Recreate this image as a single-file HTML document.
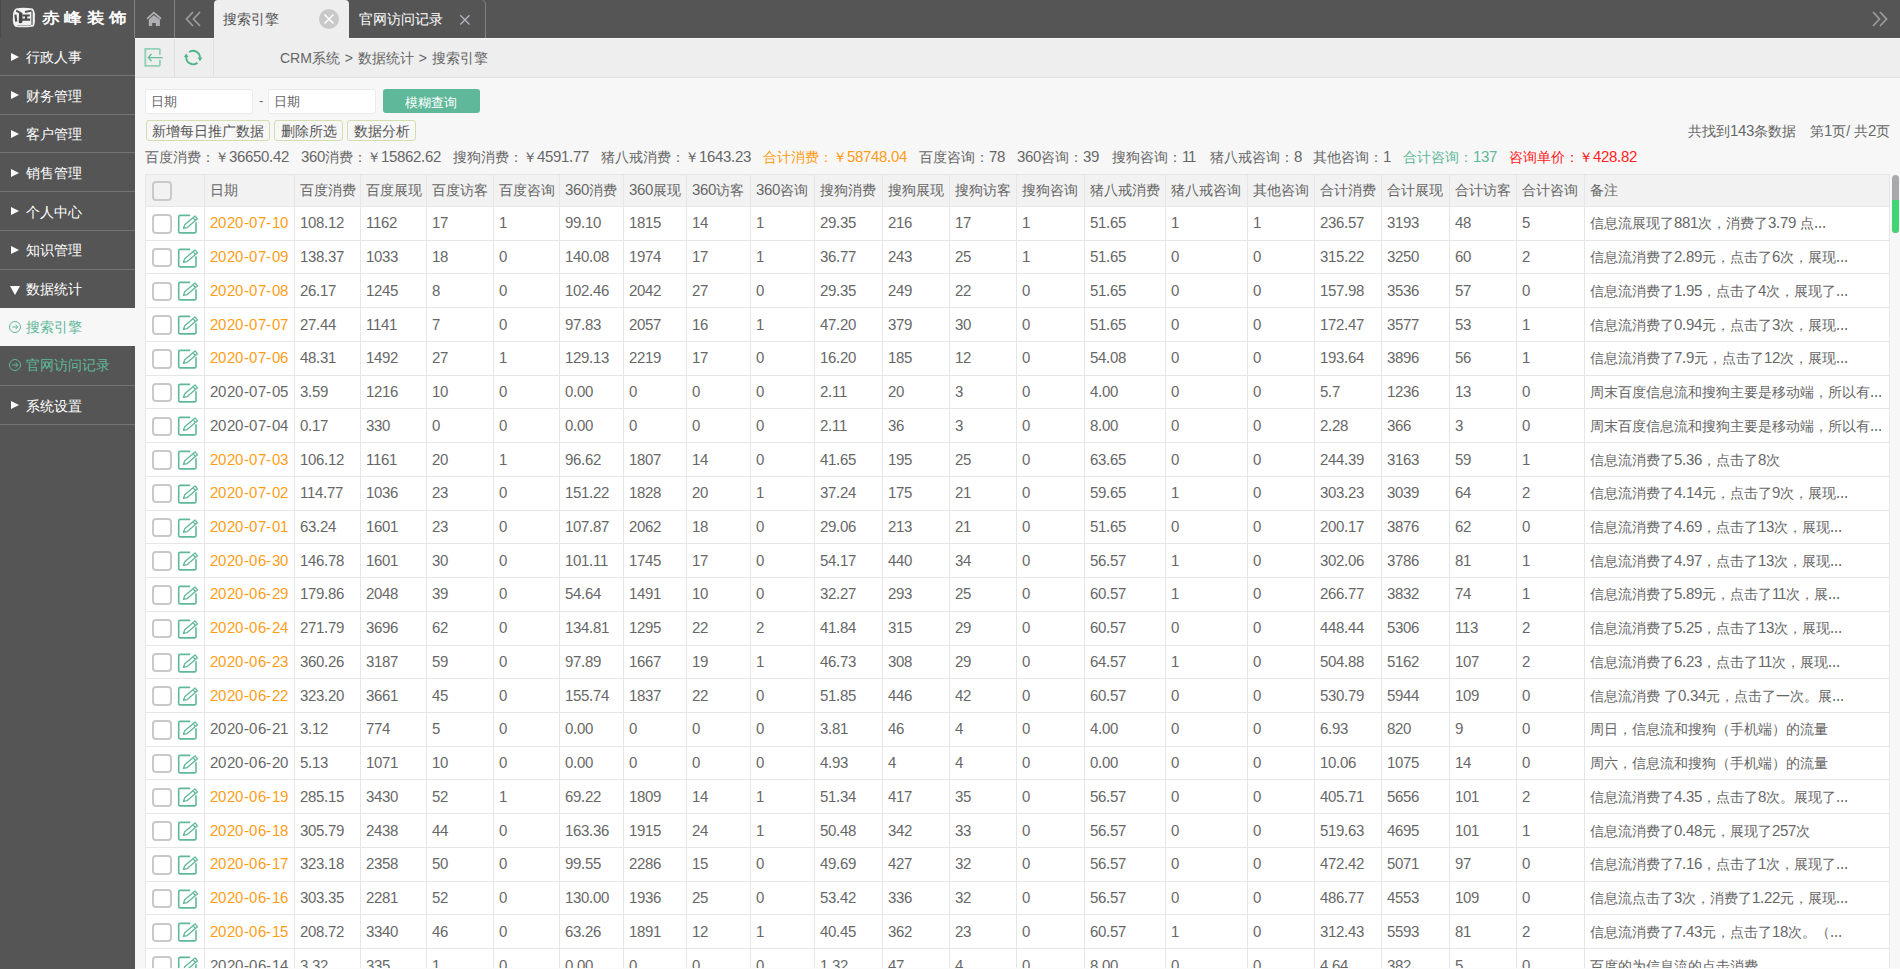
<!DOCTYPE html>
<html><head><meta charset="utf-8">
<style>
@font-face{font-family:"LSD";src:local("Liberation Sans");size-adjust:104%;unicode-range:U+0030-0039,U+002E,U+002D}
*{box-sizing:border-box;margin:0;padding:0}
html,body{width:1900px;height:969px;overflow:hidden;background:#f7f7f7;font-family:"Liberation Sans",sans-serif;color:#666}
.abs{position:absolute}
#top{position:absolute;left:0;top:0;width:1900px;height:38px;background:#555}
#logo{position:absolute;left:0;top:0;width:135px;height:38px;background:#555;border-left:1px solid #4a4a4a}
#logo .t{position:absolute;left:41px;top:8px;color:#fff;font-weight:bold;font-size:18px;letter-spacing:4.3px;line-height:20px;transform:scaleY(.85);transform-origin:0 50%}
.tabsep{position:absolute;top:0;width:1px;height:38px;background:#828282}
#tab1{position:absolute;left:214px;top:0;width:135px;height:38px;background:#eee;border-radius:4px 4px 0 0}
#tab1 .t{position:absolute;left:9px;top:10px;font-size:14px;line-height:18px;color:#555}
#tab1 .x{position:absolute;left:105.3px;top:9px;width:20px;height:20px;border-radius:50%;background:#c9c9c9}
#tab2 .t{position:absolute;left:359px;top:10px;font-size:14px;line-height:18px;color:#fff}
#side{position:absolute;left:0;top:38px;width:135px;height:931px;background:#555}
.mi{position:absolute;left:0;width:135px;height:38.73px;border-bottom:1px solid #747474;color:#fff;font-size:14px}
.mi .tri{position:absolute;left:11px;top:15.3px;width:0;height:0;border-left:8px solid #fff;border-top:4.8px solid transparent;border-bottom:4.8px solid transparent}
.mi .tri.d{left:10px;top:16px;border-top:9px solid #fff;border-left:5px solid transparent;border-right:5px solid transparent;border-bottom:0}
.mi .t{position:absolute;left:26px;top:10.5px;line-height:18px}
.sub{position:absolute;left:0;width:135px;height:39px;color:#5fb89a;font-size:14px}
.sub .t{position:absolute;left:26px;top:10px;line-height:18px}
.sub .ci{position:absolute;left:8.5px;top:13px;width:12px;height:12px;border:1px solid #5fb89a;border-radius:50%}.sub .ci svg{position:absolute;left:0;top:0}
#tool{position:absolute;left:135px;top:38px;width:1765px;height:40px;background:#eee;border-top:1px solid #f8f8f8;border-bottom:1px solid #e2e2e2}
#tool .sep{position:absolute;top:0;width:1px;height:38px;background:#e0e0e0}
#crumb{position:absolute;left:280px;top:49px;font-size:14px;line-height:18px;color:#666;word-spacing:1px}
.inp{position:absolute;top:89px;height:25px;background:#fff;border:1px solid #eaeaea;border-radius:3px;font-size:13px;color:#666}
.inp span{position:absolute;left:5px;top:3px;line-height:18px}
#dash{position:absolute;left:259px;top:92px;font-size:13px;line-height:18px}
#qbtn{position:absolute;left:383px;top:89px;width:97px;height:24px;background:#5fb89a;border-radius:3px;color:#fff;font-size:13px;text-align:center;line-height:27px;padding-right:2px}
.btn{position:absolute;top:120px;height:21px;border:1px solid #d3deae;border-radius:3px;background:#f7f7f7;font-size:14px;line-height:20px;color:#555;text-align:center}
#info{font-family:"LSD","Liberation Sans",sans-serif;position:absolute;right:10px;top:122px;font-size:14px;line-height:18px;color:#666;white-space:nowrap}
#stats{font-family:"LSD","Liberation Sans",sans-serif;position:absolute;left:145px;top:148px;font-size:14px;line-height:18px;color:#666;white-space:nowrap}
#stats span{position:absolute;top:0;white-space:nowrap}
.or{color:#ff9c14}.gr{color:#5fb89a}.rd{color:#f22}
#tbl{position:absolute;left:145px;top:174px;width:1745px;border-collapse:collapse;table-layout:fixed;background:#fff}
#tbl th,#tbl td{font-family:"LSD","Liberation Sans",sans-serif;border:1px solid #e6e6e6;padding:0 5px;text-align:left;white-space:nowrap;overflow:hidden;font-weight:normal;font-size:14px;color:#666}
#tbl th{background:#f2f2f2;height:32px}#tbl th .cb{background:transparent}
#tbl td{height:33.74px}
#tbl td.o{color:#ff9c14}#tbl td:last-child{padding-top:2px}#tbl td.dt{letter-spacing:.45px}
.cb{display:inline-block;vertical-align:middle;width:19.5px;height:19.5px;border:2px solid #c9c9c9;border-radius:4px;background:#fff;position:relative;top:.5px}
#tbl .c0{padding:0 0 0 6px}
.ed{vertical-align:middle;margin-left:5.5px;position:relative;top:.6px}
#sb{position:absolute;left:1892px;top:175px;width:7px;height:58px;border-radius:4px;background:#a9a9ad;overflow:hidden}
#sb i{position:absolute;left:0;top:25px;width:7px;height:33px;background:#41d474;border-radius:0 0 4px 4px}
</style></head><body>
<div id="top"></div>
<div id="logo">
<svg class="abs" style="left:10px;top:6px" width="26" height="23" viewBox="10 6 26 23"><path d="M15 8.4Q23 7.2 31.6 8.6Q34.6 12 33.8 18Q34.4 24.4 32.4 26.4Q23 28 14.2 26.8Q11.2 24 12 17Q11.6 10.4 15 8.4Z" fill="#f2f2f2"/><path d="M18 13.2Q19.8 11.6 21.6 13.4L21.4 22.2Q19.6 24.2 17.8 22.4Z" fill="#454545"/><path d="M21.6 14.4H28.8V16.6H21.6ZM21.2 18.6H29.2V20.8H21.2ZM24 15.5H26.2V19H24Z" fill="#4a4a4a"/><path d="M15.2 10.6L20.2 13.4M24 12L30.6 10.6" stroke="#505050" stroke-width="1.8"/><path d="M31 11V25" stroke="#5a5a5a" stroke-width="1.3"/><path d="M14.4 14.6L15.2 21.6" stroke="#4e4e4e" stroke-width="2.2"/><path d="M16 25.6H30" stroke="#aaa" stroke-width="1"/></svg>
<div class="t">赤峰装饰</div></div>
<div class="tabsep" style="left:134px"></div>
<div class="tabsep" style="left:174px"></div>
<svg class="abs" style="left:145px;top:10px" width="18" height="18" viewBox="0 0 18 18"><path d="M2.6 8.3L8.8 2.6L15.4 8.3" fill="none" stroke="#b1afb4" stroke-width="1.8" stroke-linecap="round"/><path d="M3.8 9.6L8.8 5.3L14.9 9.6V16H10.8V13H7.2V16H3.8z" fill="#b1afb4"/></svg>
<svg class="abs" style="left:185px;top:11px" width="17" height="16" viewBox="0 0 17 16"><path d="M8 1L1.5 8L8 15M15 1L8.5 8L15 15" fill="none" stroke="#9a9a9a" stroke-width="1.8"/></svg>
<div id="tab1"><div class="t">搜索引擎</div><div class="x"><svg width="20" height="20" viewBox="0 0 20 20"><path d="M5.5 5.5L14.5 14.5M14.5 5.5L5.5 14.5" stroke="#fff" stroke-width="1.5"/></svg></div></div>
<div id="tab2"><div class="t">官网访问记录</div></div>
<svg class="abs" style="left:459px;top:14px" width="12" height="12" viewBox="0 0 12 12"><path d="M1.3 1.3L10.5 10.5M10.5 1.3L1.3 10.5" stroke="#b8b4c0" stroke-width="1.3"/></svg>
<svg class="abs" style="left:478px;top:0" width="10" height="38" viewBox="0 0 10 38"><path d="M7.5 38V4Q7.5 1 4.5 0" fill="none" stroke="#828282" stroke-width="1"/></svg>
<svg class="abs" style="left:1872px;top:11px" width="16" height="16" viewBox="0 0 16 16"><path d="M1 1L7.5 8L1 15M8 1L14.5 8L8 15" fill="none" stroke="#9a9a9a" stroke-width="1.8"/></svg>

<div id="side">
<div class="mi" style="top:-0.73px"><i class="tri"></i><span class="t">行政人事</span></div>
<div class="mi" style="top:38px"><i class="tri"></i><span class="t">财务管理</span></div>
<div class="mi" style="top:76.73px"><i class="tri"></i><span class="t">客户管理</span></div>
<div class="mi" style="top:115.46px"><i class="tri"></i><span class="t">销售管理</span></div>
<div class="mi" style="top:154.19px"><i class="tri"></i><span class="t">个人中心</span></div>
<div class="mi" style="top:192.92px"><i class="tri"></i><span class="t">知识管理</span></div>
<div class="mi" style="top:231.65px;height:38.35px;border-bottom:0"><i class="tri d"></i><span class="t">数据统计</span></div>
<div class="sub" style="top:270px;height:38.4px;background:#f7f7f7"><i class="ci"><svg width="12" height="12" viewBox="0 0 12 12" style="left:-1px;top:-1px"><path d="M3.2 6H8.8M6.5 3.7L8.8 6L6.5 8.3" fill="none" stroke="#5fb89a" stroke-width="1"/></svg></i><span class="t">搜索引擎</span></div>
<div class="sub" style="top:308.4px;height:39.6px;border-bottom:1px solid #747474"><i class="ci"><svg width="12" height="12" viewBox="0 0 12 12" style="left:-1px;top:-1px"><path d="M3.2 6H8.8M6.5 3.7L8.8 6L6.5 8.3" fill="none" stroke="#5fb89a" stroke-width="1"/></svg></i><span class="t">官网访问记录</span></div>
<div class="mi" style="top:348px;height:39px"><i class="tri"></i><span class="t">系统设置</span></div>
</div>

<div id="tool"><div class="sep" style="left:39px"></div><div class="sep" style="left:78px"></div></div>
<svg class="abs" style="left:143px;top:47px" width="21" height="21" viewBox="0 0 21 21"><path d="M16.9 7.7V2.9Q16.9 1.9 15.9 1.9H2.3V18.8H15.9Q16.9 18.8 16.9 17.8V12.8" fill="none" stroke="#93d1b7" stroke-width="1.8"/><path d="M5.3 10.6H19.7M8.5 7L5.3 10.6L8.5 14.2" fill="none" stroke="#62bf9a" stroke-width="1.3"/></svg>
<svg class="abs" style="left:183px;top:47px" width="21" height="21" viewBox="0 0 21 21"><path d="M6.05 5.1A6.9 6.9 0 0 1 16.97 10.6M14.44 15.71A6.9 6.9 0 0 1 3.22 9.87" fill="none" stroke="#4fb488" stroke-width="1.9"/><path d="M14.6 10.4H19.4L17 14.2Z M0.9 10.1H5.5L3.2 6.6Z" fill="#4fb488"/></svg>
<div style="position:absolute;left:214px;top:38px;width:135px;height:1px;background:#eee"></div>
<div id="crumb">CRM系统 &gt; 数据统计 &gt; 搜索引擎</div>

<div class="inp" style="left:145px;width:108px"><span>日期</span></div>
<div id="dash">-</div>
<div class="inp" style="left:268px;width:108px"><span>日期</span></div>
<div id="qbtn">模糊查询</div>
<div class="btn" style="left:146px;width:124px">新增每日推广数据</div>
<div class="btn" style="left:274px;width:69px">删除所选</div>
<div class="btn" style="left:347px;width:69px">数据分析</div>
<div id="info" style="right:auto;left:1688px">共找到143条数据</div><div id="info">第1页/ 共2页</div>
<div id="stats">
<span style="left:0">百度消费：￥36650.42</span>
<span style="left:156px">360消费：￥15862.62</span>
<span style="left:308px">搜狗消费：￥4591.77</span>
<span style="left:456px">猪八戒消费：￥1643.23</span>
<span class="or" style="left:618px">合计消费：￥58748.04</span>
<span style="left:774px">百度咨询：78</span>
<span style="left:872px">360咨询：39</span>
<span style="left:967px">搜狗咨询：11</span>
<span style="left:1065px">猪八戒咨询：8</span>
<span style="left:1168px">其他咨询：1</span>
<span class="gr" style="left:1258px">合计咨询：137</span>
<span class="rd" style="left:1364px">咨询单价：￥428.82</span>
</div>

<table id="tbl"><colgroup><col style="width:59px"><col style="width:90px"><col style="width:66px"><col style="width:66px"><col style="width:67px"><col style="width:66px"><col style="width:64px"><col style="width:63px"><col style="width:64px"><col style="width:64px"><col style="width:68px"><col style="width:67px"><col style="width:67px"><col style="width:68px"><col style="width:81px"><col style="width:82px"><col style="width:67px"><col style="width:67px"><col style="width:68px"><col style="width:67px"><col style="width:68px"><col style="width:305px"></colgroup>
<thead><tr><th class="c0"><span class="cb"></span></th><th>日期</th><th>百度消费</th><th>百度展现</th><th>百度访客</th><th>百度咨询</th><th>360消费</th><th>360展现</th><th>360访客</th><th>360咨询</th><th>搜狗消费</th><th>搜狗展现</th><th>搜狗访客</th><th>搜狗咨询</th><th>猪八戒消费</th><th>猪八戒咨询</th><th>其他咨询</th><th>合计消费</th><th>合计展现</th><th>合计访客</th><th>合计咨询</th><th>备注</th></tr></thead>
<tbody>
<tr><td class="c0"><span class="cb"></span><svg class="ed" width="22" height="22" viewBox="0 0 22 22"><path d="M13.2 2.4H3.2A1.5 1.5 0 0 0 1.7 3.9V18.4A1.5 1.5 0 0 0 3.2 19.9H17.5A1.5 1.5 0 0 0 19 18.4V9.2" fill="none" stroke="#5fb89a" stroke-width="1.6"/><g transform="translate(6.1 15.6) rotate(-40.5)"><path d="M0.5 0L3.8 -1.9H17.3V1.9H3.8Z M14.6 -1.9V1.9" fill="none" stroke="#5fb89a" stroke-width="1.3" stroke-linejoin="round"/></g></svg></td><td class="dt o">2020-07-10</td><td>108.12</td><td>1162</td><td>17</td><td>1</td><td>99.10</td><td>1815</td><td>14</td><td>1</td><td>29.35</td><td>216</td><td>17</td><td>1</td><td>51.65</td><td>1</td><td>1</td><td>236.57</td><td>3193</td><td>48</td><td>5</td><td>信息流展现了881次，消费了3.79 点...</td></tr>
<tr><td class="c0"><span class="cb"></span><svg class="ed" width="22" height="22" viewBox="0 0 22 22"><path d="M13.2 2.4H3.2A1.5 1.5 0 0 0 1.7 3.9V18.4A1.5 1.5 0 0 0 3.2 19.9H17.5A1.5 1.5 0 0 0 19 18.4V9.2" fill="none" stroke="#5fb89a" stroke-width="1.6"/><g transform="translate(6.1 15.6) rotate(-40.5)"><path d="M0.5 0L3.8 -1.9H17.3V1.9H3.8Z M14.6 -1.9V1.9" fill="none" stroke="#5fb89a" stroke-width="1.3" stroke-linejoin="round"/></g></svg></td><td class="dt o">2020-07-09</td><td>138.37</td><td>1033</td><td>18</td><td>0</td><td>140.08</td><td>1974</td><td>17</td><td>1</td><td>36.77</td><td>243</td><td>25</td><td>1</td><td>51.65</td><td>0</td><td>0</td><td>315.22</td><td>3250</td><td>60</td><td>2</td><td>信息流消费了2.89元，点击了6次，展现...</td></tr>
<tr><td class="c0"><span class="cb"></span><svg class="ed" width="22" height="22" viewBox="0 0 22 22"><path d="M13.2 2.4H3.2A1.5 1.5 0 0 0 1.7 3.9V18.4A1.5 1.5 0 0 0 3.2 19.9H17.5A1.5 1.5 0 0 0 19 18.4V9.2" fill="none" stroke="#5fb89a" stroke-width="1.6"/><g transform="translate(6.1 15.6) rotate(-40.5)"><path d="M0.5 0L3.8 -1.9H17.3V1.9H3.8Z M14.6 -1.9V1.9" fill="none" stroke="#5fb89a" stroke-width="1.3" stroke-linejoin="round"/></g></svg></td><td class="dt o">2020-07-08</td><td>26.17</td><td>1245</td><td>8</td><td>0</td><td>102.46</td><td>2042</td><td>27</td><td>0</td><td>29.35</td><td>249</td><td>22</td><td>0</td><td>51.65</td><td>0</td><td>0</td><td>157.98</td><td>3536</td><td>57</td><td>0</td><td>信息流消费了1.95，点击了4次，展现了...</td></tr>
<tr><td class="c0"><span class="cb"></span><svg class="ed" width="22" height="22" viewBox="0 0 22 22"><path d="M13.2 2.4H3.2A1.5 1.5 0 0 0 1.7 3.9V18.4A1.5 1.5 0 0 0 3.2 19.9H17.5A1.5 1.5 0 0 0 19 18.4V9.2" fill="none" stroke="#5fb89a" stroke-width="1.6"/><g transform="translate(6.1 15.6) rotate(-40.5)"><path d="M0.5 0L3.8 -1.9H17.3V1.9H3.8Z M14.6 -1.9V1.9" fill="none" stroke="#5fb89a" stroke-width="1.3" stroke-linejoin="round"/></g></svg></td><td class="dt o">2020-07-07</td><td>27.44</td><td>1141</td><td>7</td><td>0</td><td>97.83</td><td>2057</td><td>16</td><td>1</td><td>47.20</td><td>379</td><td>30</td><td>0</td><td>51.65</td><td>0</td><td>0</td><td>172.47</td><td>3577</td><td>53</td><td>1</td><td>信息流消费了0.94元，点击了3次，展现...</td></tr>
<tr><td class="c0"><span class="cb"></span><svg class="ed" width="22" height="22" viewBox="0 0 22 22"><path d="M13.2 2.4H3.2A1.5 1.5 0 0 0 1.7 3.9V18.4A1.5 1.5 0 0 0 3.2 19.9H17.5A1.5 1.5 0 0 0 19 18.4V9.2" fill="none" stroke="#5fb89a" stroke-width="1.6"/><g transform="translate(6.1 15.6) rotate(-40.5)"><path d="M0.5 0L3.8 -1.9H17.3V1.9H3.8Z M14.6 -1.9V1.9" fill="none" stroke="#5fb89a" stroke-width="1.3" stroke-linejoin="round"/></g></svg></td><td class="dt o">2020-07-06</td><td>48.31</td><td>1492</td><td>27</td><td>1</td><td>129.13</td><td>2219</td><td>17</td><td>0</td><td>16.20</td><td>185</td><td>12</td><td>0</td><td>54.08</td><td>0</td><td>0</td><td>193.64</td><td>3896</td><td>56</td><td>1</td><td>信息流消费了7.9元，点击了12次，展现...</td></tr>
<tr><td class="c0"><span class="cb"></span><svg class="ed" width="22" height="22" viewBox="0 0 22 22"><path d="M13.2 2.4H3.2A1.5 1.5 0 0 0 1.7 3.9V18.4A1.5 1.5 0 0 0 3.2 19.9H17.5A1.5 1.5 0 0 0 19 18.4V9.2" fill="none" stroke="#5fb89a" stroke-width="1.6"/><g transform="translate(6.1 15.6) rotate(-40.5)"><path d="M0.5 0L3.8 -1.9H17.3V1.9H3.8Z M14.6 -1.9V1.9" fill="none" stroke="#5fb89a" stroke-width="1.3" stroke-linejoin="round"/></g></svg></td><td class="dt">2020-07-05</td><td>3.59</td><td>1216</td><td>10</td><td>0</td><td>0.00</td><td>0</td><td>0</td><td>0</td><td>2.11</td><td>20</td><td>3</td><td>0</td><td>4.00</td><td>0</td><td>0</td><td>5.7</td><td>1236</td><td>13</td><td>0</td><td>周末百度信息流和搜狗主要是移动端，所以有...</td></tr>
<tr><td class="c0"><span class="cb"></span><svg class="ed" width="22" height="22" viewBox="0 0 22 22"><path d="M13.2 2.4H3.2A1.5 1.5 0 0 0 1.7 3.9V18.4A1.5 1.5 0 0 0 3.2 19.9H17.5A1.5 1.5 0 0 0 19 18.4V9.2" fill="none" stroke="#5fb89a" stroke-width="1.6"/><g transform="translate(6.1 15.6) rotate(-40.5)"><path d="M0.5 0L3.8 -1.9H17.3V1.9H3.8Z M14.6 -1.9V1.9" fill="none" stroke="#5fb89a" stroke-width="1.3" stroke-linejoin="round"/></g></svg></td><td class="dt">2020-07-04</td><td>0.17</td><td>330</td><td>0</td><td>0</td><td>0.00</td><td>0</td><td>0</td><td>0</td><td>2.11</td><td>36</td><td>3</td><td>0</td><td>8.00</td><td>0</td><td>0</td><td>2.28</td><td>366</td><td>3</td><td>0</td><td>周末百度信息流和搜狗主要是移动端，所以有...</td></tr>
<tr><td class="c0"><span class="cb"></span><svg class="ed" width="22" height="22" viewBox="0 0 22 22"><path d="M13.2 2.4H3.2A1.5 1.5 0 0 0 1.7 3.9V18.4A1.5 1.5 0 0 0 3.2 19.9H17.5A1.5 1.5 0 0 0 19 18.4V9.2" fill="none" stroke="#5fb89a" stroke-width="1.6"/><g transform="translate(6.1 15.6) rotate(-40.5)"><path d="M0.5 0L3.8 -1.9H17.3V1.9H3.8Z M14.6 -1.9V1.9" fill="none" stroke="#5fb89a" stroke-width="1.3" stroke-linejoin="round"/></g></svg></td><td class="dt o">2020-07-03</td><td>106.12</td><td>1161</td><td>20</td><td>1</td><td>96.62</td><td>1807</td><td>14</td><td>0</td><td>41.65</td><td>195</td><td>25</td><td>0</td><td>63.65</td><td>0</td><td>0</td><td>244.39</td><td>3163</td><td>59</td><td>1</td><td>信息流消费了5.36，点击了8次</td></tr>
<tr><td class="c0"><span class="cb"></span><svg class="ed" width="22" height="22" viewBox="0 0 22 22"><path d="M13.2 2.4H3.2A1.5 1.5 0 0 0 1.7 3.9V18.4A1.5 1.5 0 0 0 3.2 19.9H17.5A1.5 1.5 0 0 0 19 18.4V9.2" fill="none" stroke="#5fb89a" stroke-width="1.6"/><g transform="translate(6.1 15.6) rotate(-40.5)"><path d="M0.5 0L3.8 -1.9H17.3V1.9H3.8Z M14.6 -1.9V1.9" fill="none" stroke="#5fb89a" stroke-width="1.3" stroke-linejoin="round"/></g></svg></td><td class="dt o">2020-07-02</td><td>114.77</td><td>1036</td><td>23</td><td>0</td><td>151.22</td><td>1828</td><td>20</td><td>1</td><td>37.24</td><td>175</td><td>21</td><td>0</td><td>59.65</td><td>1</td><td>0</td><td>303.23</td><td>3039</td><td>64</td><td>2</td><td>信息流消费了4.14元，点击了9次，展现...</td></tr>
<tr><td class="c0"><span class="cb"></span><svg class="ed" width="22" height="22" viewBox="0 0 22 22"><path d="M13.2 2.4H3.2A1.5 1.5 0 0 0 1.7 3.9V18.4A1.5 1.5 0 0 0 3.2 19.9H17.5A1.5 1.5 0 0 0 19 18.4V9.2" fill="none" stroke="#5fb89a" stroke-width="1.6"/><g transform="translate(6.1 15.6) rotate(-40.5)"><path d="M0.5 0L3.8 -1.9H17.3V1.9H3.8Z M14.6 -1.9V1.9" fill="none" stroke="#5fb89a" stroke-width="1.3" stroke-linejoin="round"/></g></svg></td><td class="dt o">2020-07-01</td><td>63.24</td><td>1601</td><td>23</td><td>0</td><td>107.87</td><td>2062</td><td>18</td><td>0</td><td>29.06</td><td>213</td><td>21</td><td>0</td><td>51.65</td><td>0</td><td>0</td><td>200.17</td><td>3876</td><td>62</td><td>0</td><td>信息流消费了4.69，点击了13次，展现...</td></tr>
<tr><td class="c0"><span class="cb"></span><svg class="ed" width="22" height="22" viewBox="0 0 22 22"><path d="M13.2 2.4H3.2A1.5 1.5 0 0 0 1.7 3.9V18.4A1.5 1.5 0 0 0 3.2 19.9H17.5A1.5 1.5 0 0 0 19 18.4V9.2" fill="none" stroke="#5fb89a" stroke-width="1.6"/><g transform="translate(6.1 15.6) rotate(-40.5)"><path d="M0.5 0L3.8 -1.9H17.3V1.9H3.8Z M14.6 -1.9V1.9" fill="none" stroke="#5fb89a" stroke-width="1.3" stroke-linejoin="round"/></g></svg></td><td class="dt o">2020-06-30</td><td>146.78</td><td>1601</td><td>30</td><td>0</td><td>101.11</td><td>1745</td><td>17</td><td>0</td><td>54.17</td><td>440</td><td>34</td><td>0</td><td>56.57</td><td>1</td><td>0</td><td>302.06</td><td>3786</td><td>81</td><td>1</td><td>信息流消费了4.97，点击了13次，展现...</td></tr>
<tr><td class="c0"><span class="cb"></span><svg class="ed" width="22" height="22" viewBox="0 0 22 22"><path d="M13.2 2.4H3.2A1.5 1.5 0 0 0 1.7 3.9V18.4A1.5 1.5 0 0 0 3.2 19.9H17.5A1.5 1.5 0 0 0 19 18.4V9.2" fill="none" stroke="#5fb89a" stroke-width="1.6"/><g transform="translate(6.1 15.6) rotate(-40.5)"><path d="M0.5 0L3.8 -1.9H17.3V1.9H3.8Z M14.6 -1.9V1.9" fill="none" stroke="#5fb89a" stroke-width="1.3" stroke-linejoin="round"/></g></svg></td><td class="dt o">2020-06-29</td><td>179.86</td><td>2048</td><td>39</td><td>0</td><td>54.64</td><td>1491</td><td>10</td><td>0</td><td>32.27</td><td>293</td><td>25</td><td>0</td><td>60.57</td><td>1</td><td>0</td><td>266.77</td><td>3832</td><td>74</td><td>1</td><td>信息流消费了5.89元，点击了11次，展...</td></tr>
<tr><td class="c0"><span class="cb"></span><svg class="ed" width="22" height="22" viewBox="0 0 22 22"><path d="M13.2 2.4H3.2A1.5 1.5 0 0 0 1.7 3.9V18.4A1.5 1.5 0 0 0 3.2 19.9H17.5A1.5 1.5 0 0 0 19 18.4V9.2" fill="none" stroke="#5fb89a" stroke-width="1.6"/><g transform="translate(6.1 15.6) rotate(-40.5)"><path d="M0.5 0L3.8 -1.9H17.3V1.9H3.8Z M14.6 -1.9V1.9" fill="none" stroke="#5fb89a" stroke-width="1.3" stroke-linejoin="round"/></g></svg></td><td class="dt o">2020-06-24</td><td>271.79</td><td>3696</td><td>62</td><td>0</td><td>134.81</td><td>1295</td><td>22</td><td>2</td><td>41.84</td><td>315</td><td>29</td><td>0</td><td>60.57</td><td>0</td><td>0</td><td>448.44</td><td>5306</td><td>113</td><td>2</td><td>信息流消费了5.25，点击了13次，展现...</td></tr>
<tr><td class="c0"><span class="cb"></span><svg class="ed" width="22" height="22" viewBox="0 0 22 22"><path d="M13.2 2.4H3.2A1.5 1.5 0 0 0 1.7 3.9V18.4A1.5 1.5 0 0 0 3.2 19.9H17.5A1.5 1.5 0 0 0 19 18.4V9.2" fill="none" stroke="#5fb89a" stroke-width="1.6"/><g transform="translate(6.1 15.6) rotate(-40.5)"><path d="M0.5 0L3.8 -1.9H17.3V1.9H3.8Z M14.6 -1.9V1.9" fill="none" stroke="#5fb89a" stroke-width="1.3" stroke-linejoin="round"/></g></svg></td><td class="dt o">2020-06-23</td><td>360.26</td><td>3187</td><td>59</td><td>0</td><td>97.89</td><td>1667</td><td>19</td><td>1</td><td>46.73</td><td>308</td><td>29</td><td>0</td><td>64.57</td><td>1</td><td>0</td><td>504.88</td><td>5162</td><td>107</td><td>2</td><td>信息流消费了6.23，点击了11次，展现...</td></tr>
<tr><td class="c0"><span class="cb"></span><svg class="ed" width="22" height="22" viewBox="0 0 22 22"><path d="M13.2 2.4H3.2A1.5 1.5 0 0 0 1.7 3.9V18.4A1.5 1.5 0 0 0 3.2 19.9H17.5A1.5 1.5 0 0 0 19 18.4V9.2" fill="none" stroke="#5fb89a" stroke-width="1.6"/><g transform="translate(6.1 15.6) rotate(-40.5)"><path d="M0.5 0L3.8 -1.9H17.3V1.9H3.8Z M14.6 -1.9V1.9" fill="none" stroke="#5fb89a" stroke-width="1.3" stroke-linejoin="round"/></g></svg></td><td class="dt o">2020-06-22</td><td>323.20</td><td>3661</td><td>45</td><td>0</td><td>155.74</td><td>1837</td><td>22</td><td>0</td><td>51.85</td><td>446</td><td>42</td><td>0</td><td>60.57</td><td>0</td><td>0</td><td>530.79</td><td>5944</td><td>109</td><td>0</td><td>信息流消费 了0.34元，点击了一次。展...</td></tr>
<tr><td class="c0"><span class="cb"></span><svg class="ed" width="22" height="22" viewBox="0 0 22 22"><path d="M13.2 2.4H3.2A1.5 1.5 0 0 0 1.7 3.9V18.4A1.5 1.5 0 0 0 3.2 19.9H17.5A1.5 1.5 0 0 0 19 18.4V9.2" fill="none" stroke="#5fb89a" stroke-width="1.6"/><g transform="translate(6.1 15.6) rotate(-40.5)"><path d="M0.5 0L3.8 -1.9H17.3V1.9H3.8Z M14.6 -1.9V1.9" fill="none" stroke="#5fb89a" stroke-width="1.3" stroke-linejoin="round"/></g></svg></td><td class="dt">2020-06-21</td><td>3.12</td><td>774</td><td>5</td><td>0</td><td>0.00</td><td>0</td><td>0</td><td>0</td><td>3.81</td><td>46</td><td>4</td><td>0</td><td>4.00</td><td>0</td><td>0</td><td>6.93</td><td>820</td><td>9</td><td>0</td><td>周日，信息流和搜狗（手机端）的流量</td></tr>
<tr><td class="c0"><span class="cb"></span><svg class="ed" width="22" height="22" viewBox="0 0 22 22"><path d="M13.2 2.4H3.2A1.5 1.5 0 0 0 1.7 3.9V18.4A1.5 1.5 0 0 0 3.2 19.9H17.5A1.5 1.5 0 0 0 19 18.4V9.2" fill="none" stroke="#5fb89a" stroke-width="1.6"/><g transform="translate(6.1 15.6) rotate(-40.5)"><path d="M0.5 0L3.8 -1.9H17.3V1.9H3.8Z M14.6 -1.9V1.9" fill="none" stroke="#5fb89a" stroke-width="1.3" stroke-linejoin="round"/></g></svg></td><td class="dt">2020-06-20</td><td>5.13</td><td>1071</td><td>10</td><td>0</td><td>0.00</td><td>0</td><td>0</td><td>0</td><td>4.93</td><td>4</td><td>4</td><td>0</td><td>0.00</td><td>0</td><td>0</td><td>10.06</td><td>1075</td><td>14</td><td>0</td><td>周六，信息流和搜狗（手机端）的流量</td></tr>
<tr><td class="c0"><span class="cb"></span><svg class="ed" width="22" height="22" viewBox="0 0 22 22"><path d="M13.2 2.4H3.2A1.5 1.5 0 0 0 1.7 3.9V18.4A1.5 1.5 0 0 0 3.2 19.9H17.5A1.5 1.5 0 0 0 19 18.4V9.2" fill="none" stroke="#5fb89a" stroke-width="1.6"/><g transform="translate(6.1 15.6) rotate(-40.5)"><path d="M0.5 0L3.8 -1.9H17.3V1.9H3.8Z M14.6 -1.9V1.9" fill="none" stroke="#5fb89a" stroke-width="1.3" stroke-linejoin="round"/></g></svg></td><td class="dt o">2020-06-19</td><td>285.15</td><td>3430</td><td>52</td><td>1</td><td>69.22</td><td>1809</td><td>14</td><td>1</td><td>51.34</td><td>417</td><td>35</td><td>0</td><td>56.57</td><td>0</td><td>0</td><td>405.71</td><td>5656</td><td>101</td><td>2</td><td>信息流消费了4.35，点击了8次。展现了...</td></tr>
<tr><td class="c0"><span class="cb"></span><svg class="ed" width="22" height="22" viewBox="0 0 22 22"><path d="M13.2 2.4H3.2A1.5 1.5 0 0 0 1.7 3.9V18.4A1.5 1.5 0 0 0 3.2 19.9H17.5A1.5 1.5 0 0 0 19 18.4V9.2" fill="none" stroke="#5fb89a" stroke-width="1.6"/><g transform="translate(6.1 15.6) rotate(-40.5)"><path d="M0.5 0L3.8 -1.9H17.3V1.9H3.8Z M14.6 -1.9V1.9" fill="none" stroke="#5fb89a" stroke-width="1.3" stroke-linejoin="round"/></g></svg></td><td class="dt o">2020-06-18</td><td>305.79</td><td>2438</td><td>44</td><td>0</td><td>163.36</td><td>1915</td><td>24</td><td>1</td><td>50.48</td><td>342</td><td>33</td><td>0</td><td>56.57</td><td>0</td><td>0</td><td>519.63</td><td>4695</td><td>101</td><td>1</td><td>信息流消费了0.48元，展现了257次</td></tr>
<tr><td class="c0"><span class="cb"></span><svg class="ed" width="22" height="22" viewBox="0 0 22 22"><path d="M13.2 2.4H3.2A1.5 1.5 0 0 0 1.7 3.9V18.4A1.5 1.5 0 0 0 3.2 19.9H17.5A1.5 1.5 0 0 0 19 18.4V9.2" fill="none" stroke="#5fb89a" stroke-width="1.6"/><g transform="translate(6.1 15.6) rotate(-40.5)"><path d="M0.5 0L3.8 -1.9H17.3V1.9H3.8Z M14.6 -1.9V1.9" fill="none" stroke="#5fb89a" stroke-width="1.3" stroke-linejoin="round"/></g></svg></td><td class="dt o">2020-06-17</td><td>323.18</td><td>2358</td><td>50</td><td>0</td><td>99.55</td><td>2286</td><td>15</td><td>0</td><td>49.69</td><td>427</td><td>32</td><td>0</td><td>56.57</td><td>0</td><td>0</td><td>472.42</td><td>5071</td><td>97</td><td>0</td><td>信息流消费了7.16，点击了1次，展现了...</td></tr>
<tr><td class="c0"><span class="cb"></span><svg class="ed" width="22" height="22" viewBox="0 0 22 22"><path d="M13.2 2.4H3.2A1.5 1.5 0 0 0 1.7 3.9V18.4A1.5 1.5 0 0 0 3.2 19.9H17.5A1.5 1.5 0 0 0 19 18.4V9.2" fill="none" stroke="#5fb89a" stroke-width="1.6"/><g transform="translate(6.1 15.6) rotate(-40.5)"><path d="M0.5 0L3.8 -1.9H17.3V1.9H3.8Z M14.6 -1.9V1.9" fill="none" stroke="#5fb89a" stroke-width="1.3" stroke-linejoin="round"/></g></svg></td><td class="dt o">2020-06-16</td><td>303.35</td><td>2281</td><td>52</td><td>0</td><td>130.00</td><td>1936</td><td>25</td><td>0</td><td>53.42</td><td>336</td><td>32</td><td>0</td><td>56.57</td><td>0</td><td>0</td><td>486.77</td><td>4553</td><td>109</td><td>0</td><td>信息流点击了3次，消费了1.22元，展现...</td></tr>
<tr><td class="c0"><span class="cb"></span><svg class="ed" width="22" height="22" viewBox="0 0 22 22"><path d="M13.2 2.4H3.2A1.5 1.5 0 0 0 1.7 3.9V18.4A1.5 1.5 0 0 0 3.2 19.9H17.5A1.5 1.5 0 0 0 19 18.4V9.2" fill="none" stroke="#5fb89a" stroke-width="1.6"/><g transform="translate(6.1 15.6) rotate(-40.5)"><path d="M0.5 0L3.8 -1.9H17.3V1.9H3.8Z M14.6 -1.9V1.9" fill="none" stroke="#5fb89a" stroke-width="1.3" stroke-linejoin="round"/></g></svg></td><td class="dt o">2020-06-15</td><td>208.72</td><td>3340</td><td>46</td><td>0</td><td>63.26</td><td>1891</td><td>12</td><td>1</td><td>40.45</td><td>362</td><td>23</td><td>0</td><td>60.57</td><td>1</td><td>0</td><td>312.43</td><td>5593</td><td>81</td><td>2</td><td>信息流消费了7.43元，点击了18次。（...</td></tr>
<tr><td class="c0"><span class="cb"></span><svg class="ed" width="22" height="22" viewBox="0 0 22 22"><path d="M13.2 2.4H3.2A1.5 1.5 0 0 0 1.7 3.9V18.4A1.5 1.5 0 0 0 3.2 19.9H17.5A1.5 1.5 0 0 0 19 18.4V9.2" fill="none" stroke="#5fb89a" stroke-width="1.6"/><g transform="translate(6.1 15.6) rotate(-40.5)"><path d="M0.5 0L3.8 -1.9H17.3V1.9H3.8Z M14.6 -1.9V1.9" fill="none" stroke="#5fb89a" stroke-width="1.3" stroke-linejoin="round"/></g></svg></td><td class="dt">2020-06-14</td><td>3.32</td><td>335</td><td>1</td><td>0</td><td>0.00</td><td>0</td><td>0</td><td>0</td><td>1.32</td><td>47</td><td>4</td><td>0</td><td>8.00</td><td>0</td><td>0</td><td>4.64</td><td>382</td><td>5</td><td>0</td><td>百度的为信息流的点击消费</td></tr>
</tbody></table>
<div id="sb"><i></i></div>
<div style="position:absolute;left:135px;top:968px;width:1765px;height:1px;background:#fafafa"></div>
</body></html>
